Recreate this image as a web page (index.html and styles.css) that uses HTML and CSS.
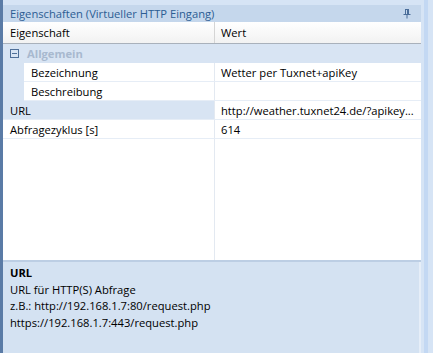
FILE: index.html
```html
<!DOCTYPE html>
<html>
<head>
  <meta charset="UTF-8">
  <title>Eigenschaften</title>
  <link rel="stylesheet" href="styles.css">
</head>
<body>
  <div class="frame">
    <div class="side-strip"></div>
    <div class="panel">
      <div class="title-bar">
        <span>Eigenschaften (Virtueller HTTP Eingang)</span>
        <svg class="pin" width="8" height="10" viewBox="0 0 8 10">
          <path d="M2 0.5h4M2.5 0.5v5M5.5 0.5v5M4.5 1v4.5M0.5 5.5h7M4 5.5v4" stroke="#4a6d99" stroke-width="1" fill="none"/>
        </svg>
      </div>

      <div class="grid">
        <div class="grid-head">
          <div class="cell name">Eigenschaft</div>
          <div class="cell value">Wert</div>
        </div>

        <div class="category">
          <span class="toggle"></span>
          <span>Allgemein</span>
        </div>

        <div class="row sub">
          <div class="cell name">Bezeichnung</div>
          <div class="cell value">Wetter per Tuxnet+apiKey</div>
        </div>
        <div class="row sub">
          <div class="cell name">Beschreibung</div>
          <div class="cell value"></div>
        </div>
        <div class="row selected">
          <div class="cell name">URL</div>
          <div class="cell value">http://weather.tuxnet24.de/?apikey...</div>
        </div>
        <div class="row">
          <div class="cell name">Abfragezyklus [s]</div>
          <div class="cell value">614</div>
        </div>

        <div class="filler">
          <div class="cell name"></div>
          <div class="cell value"></div>
        </div>
      </div>

      <div class="help">
        <div class="help-title">URL</div>
        <div>URL für HTTP(S) Abfrage</div>
        <div>z.B.: http://192.168.1.7:80/request.php</div>
        <div>https://192.168.1.7:443/request.php</div>
      </div>
    </div>
    <div class="edge"></div>
  </div>
</body>
</html>
```

FILE: styles.css
```css
* {
  box-sizing: border-box;
}

body {
  margin: 0;
  width: 433px;
  height: 353px;
  overflow: hidden;
  background: #d6e4f5;
  font-family: "Open Sans", "Noto Sans", sans-serif;
  font-size: 11.2px;
  color: #000;
}

.frame {
  display: flex;
  height: 353px;
}

.side-strip {
  width: 3px;
  background: #5a7ba6;
}

.panel {
  width: 418px;
  display: flex;
  flex-direction: column;
  padding-top: 5px;
  background: #d6e4f5;
}

.edge {
  width: 4px;
  margin-left: 3px;
  background: #c3d8f3;
}

.title-bar {
  height: 17px;
  display: flex;
  align-items: center;
  justify-content: space-between;
  padding: 0 10px 0 7px;
  background: #c5d7ec;
  color: #2c5d93;
}

.pin {
  display: block;
}

.grid {
  flex: 1;
  display: flex;
  flex-direction: column;
  background: #fff;
  border-bottom: 2px solid #bccee4;
}

.grid-head {
  display: flex;
  height: 22px;
  background: linear-gradient(#ffffff, #f2f2f2);
  border-bottom: 1px solid #a9b1bb;
}

.grid-head .cell {
  display: flex;
  align-items: center;
}

.grid-head .name {
  padding-left: 7px;
  border-right: 1px solid #d5d5d5;
}

.cell.name {
  width: 212px;
}

.cell.value {
  flex: 1;
  padding-left: 6px;
}

.category {
  height: 19px;
  display: flex;
  align-items: center;
  gap: 8px;
  padding-left: 7px;
  background: #d8e4f3;
  color: #a8b9cf;
  font-weight: bold;
}

.toggle {
  width: 9px;
  height: 9px;
  border: 1px solid #4f6f98;
  position: relative;
}

.toggle::after {
  content: "";
  position: absolute;
  left: 1px;
  right: 1px;
  top: 3px;
  height: 1px;
  background: #4f6f98;
}

.row {
  display: flex;
  height: 19px;
  background: #d8e4f3;
}

.row .cell {
  display: flex;
  align-items: center;
  background: #fff;
  border-bottom: 1px solid #e6edf6;
  white-space: nowrap;
  overflow: hidden;
}

.row .name {
  padding-left: 7px;
  border-right: 1px solid #e3e9f1;
}

.row.sub .name {
  width: 191px;
  margin-left: 21px;
  padding-left: 7px;
}

.row.selected .name {
  background: #d8e4f3;
}

.filler {
  flex: 1;
  display: flex;
}

.filler .name {
  border-right: 1px solid #e3e9f1;
}

.help {
  height: 91px;
  padding: 3px 7px;
  background: #d4e2f2;
  border-right: 2px solid #e6eef8;
  line-height: 16.6px;
}

.help-title {
  font-weight: bold;
}
```
